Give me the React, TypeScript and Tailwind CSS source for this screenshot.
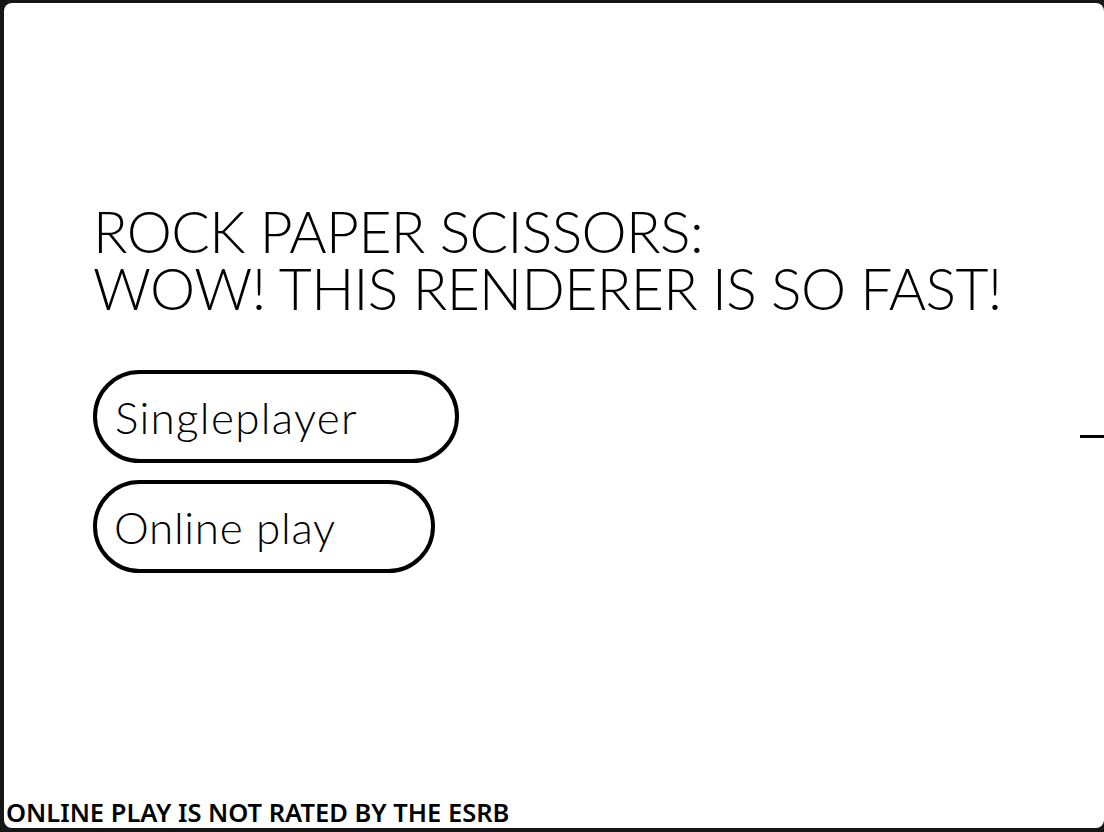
export default function App() {
  const rounded = { fontFamily: '"Lato", "Open Sans", sans-serif' };
  return (
    <div className="h-[832px] w-[1104px] overflow-hidden bg-[#161616] pl-[4px] pt-[3px] pb-[4px]">
      <div className="relative flex h-full flex-col rounded-[8px] bg-white">
        <div className="flex flex-1 flex-col pl-[89px] pt-[200px]">
          <h1 className="flex flex-col text-[57px] font-light leading-[57px] tracking-[-0.6px] text-black" style={rounded}>
            <span>ROCK PAPER SCISSORS:</span>
            <span>WOW! THIS RENDERER IS SO FAST!</span>
          </h1>
          <div className="mt-[53px] flex flex-col gap-[17px]">
            <button className="flex h-[93px] w-[366px] items-center rounded-full border-[4px] border-black pl-[18px] text-[44px] font-light tracking-[1.3px] text-black" style={rounded}>
              Singleplayer
            </button>
            <button className="flex h-[93px] w-[342px] items-center rounded-full border-[4px] border-black pl-[17px] text-[44px] font-light tracking-[0.7px] text-black" style={rounded}>
              Online play
            </button>
          </div>
        </div>
        <div className="absolute right-0 top-[432px] h-[3px] w-[24px] bg-black" />
        <p className="pl-[2px] text-[25.5px] font-semibold leading-[32px] text-black" style={{ fontFamily: '"Noto Sans", sans-serif' }}>
          ONLINE PLAY IS NOT RATED BY THE ESRB
        </p>
      </div>
    </div>
  );
}
